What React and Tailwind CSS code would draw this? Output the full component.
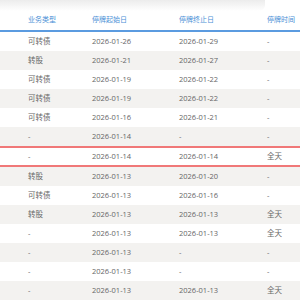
import React from 'react';

const rows = [
    ['可转债', '2026-01-26', '2026-01-29', '-'],
    ['转股', '2026-01-21', '2026-01-27', '-'],
    ['可转债', '2026-01-19', '2026-01-22', '-'],
    ['可转债', '2026-01-19', '2026-01-22', '-'],
    ['可转债', '2026-01-16', '2026-01-21', '-'],
    ['-', '2026-01-14', '-', '-'],
    ['-', '2026-01-14', '2026-01-14', '全天', true],
    ['转股', '2026-01-13', '2026-01-20', '-'],
    ['可转债', '2026-01-13', '2026-01-16', '-'],
    ['转股', '2026-01-13', '2026-01-13', '全天'],
    ['-', '2026-01-13', '2026-01-13', '全天'],
    ['-', '2026-01-13', '-', '-'],
    ['-', '2026-01-13', '-', '-'],
    ['-', '2026-01-13', '2026-01-13', '全天'],
];

const cols = 'grid grid-cols-[64px_87px_88px_1fr] pl-[28px]';

export default function App() {
    return (
        <div className="w-[300px] h-[300px] overflow-hidden bg-white" style={{ fontFamily: '"Open Sans", "Noto Sans CJK SC", sans-serif' }}>
            <div className="h-[11px] w-[265px] rounded-br-md bg-gradient-to-b from-[#ececec] to-white" />
            <div className={`${cols} h-[21px] items-center text-[7px] text-[#4a8fd6] border-b-2 border-[#5b9be0]`}>
                <div>业务类型</div>
                <div>停牌起始日</div>
                <div>停牌终止日</div>
                <div>停牌时间</div>
            </div>
            {rows.map((r, i) => (
                <div
                    key={i}
                    className={`${cols} items-center text-[7.5px] text-[#666] ${
                        r[4]
                            ? 'h-[21px] bg-white border-y-2 border-[#f07878]'
                            : i % 2 === 0
                            ? 'h-[19px] bg-white'
                            : 'h-[19px] bg-[#f3f2f0]'
                    }`}
                >
                    <div>{r[0]}</div>
                    <div>{r[1]}</div>
                    <div>{r[2]}</div>
                    <div>{r[3]}</div>
                </div>
            ))}
        </div>
    );
}
